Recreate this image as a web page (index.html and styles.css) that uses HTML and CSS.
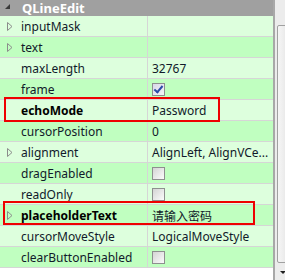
FILE: index.html
```html
<!DOCTYPE html>
<html>
<head>
<meta charset="utf-8">
<title>Property Editor</title>
<link rel="stylesheet" href="styles.css">
</head>
<body>
<div class="editor">
  <div class="sheet">
    <div class="group"><span class="grpArrow"></span><b>QLineEdit</b></div>

    <div class="row light"><div class="name"><svg class="exp" width="6" height="9"><polygon points="0.5,0.5 5,4.5 0.5,8.5" fill="none" stroke="#8c8c8c"/></svg>inputMask</div><div class="val"></div></div>
    <div class="row dark"><div class="name"><svg class="exp" width="6" height="9"><polygon points="0.5,0.5 5,4.5 0.5,8.5" fill="none" stroke="#8c8c8c"/></svg>text</div><div class="val"></div></div>
    <div class="row light"><div class="name">maxLength</div><div class="val">32767</div></div>
    <div class="row dark"><div class="name">frame</div><div class="val"><span class="chk on"></span></div></div>
    <div class="row light"><div class="name bold">echoMode</div><div class="val">Password</div></div>
    <div class="row dark"><div class="name">cursorPosition</div><div class="val">0</div></div>
    <div class="row light"><div class="name"><svg class="exp" width="6" height="9"><polygon points="0.5,0.5 5,4.5 0.5,8.5" fill="none" stroke="#8c8c8c"/></svg>alignment</div><div class="val">AlignLeft, AlignVCe...</div></div>
    <div class="row dark"><div class="name">dragEnabled</div><div class="val"><span class="chk"></span></div></div>
    <div class="row light"><div class="name">readOnly</div><div class="val"><span class="chk"></span></div></div>
    <div class="row dark"><div class="name bold"><svg class="exp" width="6" height="9"><polygon points="0.5,0.5 5,4.5 0.5,8.5" fill="none" stroke="#8c8c8c"/></svg>placeholderText</div><div class="val cjk">请输入密码</div></div>
    <div class="row light"><div class="name">cursorMoveStyle</div><div class="val">LogicalMoveStyle</div></div>
    <div class="row dark"><div class="name">clearButtonEnabled</div><div class="val"><span class="chk"></span></div></div>

    <div class="mark markEcho"></div>
    <div class="mark markHolder"></div>
  </div>
  <div class="vscroll">
    <div class="thumb"></div>
    <div class="down"></div>
  </div>
</div>
</body>
</html>
```

FILE: styles.css
```css
body { margin:0px; padding:0px; background:#ffffff; font-family:"Noto Sans","Open Sans",sans-serif; font-size:12px; color:#000000; }
.editor { display:flex; width:285px; height:280px; overflow:hidden; }
.sheet { position:relative; width:273px; flex:none; }
.group { height:16px; background:#a0a0a0; color:#ffffff; font-size:13px; line-height:15px; display:flex; align-items:center; padding-left:5px; }
.group b { margin-left:12px; }
.grpArrow { width:0; height:0; border-left:5px solid transparent; border-bottom:5px solid #3a3a3a; margin-top:-3px; }
.row { display:flex; height:20px; border-bottom:1px solid #d6d6d6; line-height:21px; }
.light { background:#ddffdd; }
.dark { background:#c0ffc0; }
.name { position:relative; width:126px; padding-left:21px; border-right:1px solid #d6d6d6; white-space:nowrap; color:#111a2a; }
.bold { font-weight:bold; color:#000000; }
.val { flex:1; padding-left:4px; white-space:nowrap; overflow:hidden; color:#111a2a; }
.cjk { font-family:"Noto Sans CJK SC",sans-serif; }
.exp { position:absolute; left:7px; top:6px; }
.chk { display:inline-block; width:11px; height:11px; margin-top:4px; border:1px solid #8e8f8f; background:linear-gradient(135deg,#d4d4d4,#fbfbfb); position:relative; vertical-align:top; }
.on { background:linear-gradient(135deg,#d8d8e8,#f4f4f8); }
.on:after { content:""; position:absolute; left:3px; top:0px; width:3px; height:7px; border-right:2px solid #2b4aa8; border-bottom:2px solid #2b4aa8; transform:rotate(40deg); }
.mark { position:absolute; border:2px solid #ee0000; }
.markEcho { left:4px; top:97px; width:212px; height:21px; }
.markHolder { left:3px; top:201px; width:248px; height:20px; }
.vscroll { flex:1; position:relative; background:#ececec; border-left:2px solid #a8a8a8; }
.thumb { position:absolute; left:2px; right:-6px; top:25px; height:236px; border:1px solid #a0a0a0; border-radius:2px; background:linear-gradient(90deg,#f6f6f6,#e2e2e2); }
.down { position:absolute; left:5px; top:271px; width:0; height:0; border-left:3px solid transparent; border-right:3px solid transparent; border-top:3px solid #202020; }
```
